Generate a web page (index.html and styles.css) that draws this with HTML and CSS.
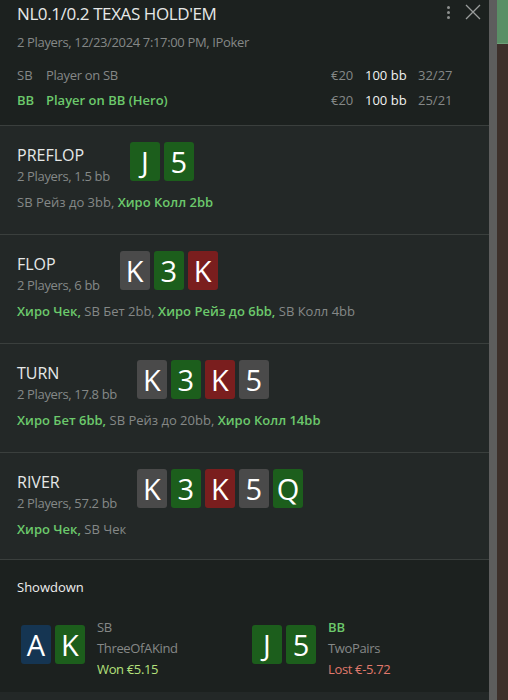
FILE: index.html
```html
<!DOCTYPE html>
<html lang="en">
<head>
  <meta charset="UTF-8">
  <meta name="viewport" content="width=device-width, initial-scale=1">
  <title>Hand History</title>
  <link rel="stylesheet" href="styles.css">
</head>
<body>
<div class="panel">
  <div class="header">
    <div class="header-top">
      <h1 class="game">NL0.1/0.2 TEXAS HOLD'EM</h1>
      <div class="tools">
        <span class="dots"><i></i><i></i><i></i></span>
        <svg class="close" width="16" height="16" viewBox="0 0 16 16"><path d="M1 1L15 15M15 1L1 15" stroke="#9a9d9c" stroke-width="1.3" fill="none"/></svg>
      </div>
    </div>
    <div class="meta">2 Players, 12/23/2024 7:17:00 PM, IPoker</div>
    <div class="players">
      <div class="player">
        <span class="pos">SB</span><span class="name">Player on SB</span>
        <span class="stack">€20</span><span class="bb">100 bb</span><span class="stat">32/27</span>
      </div>
      <div class="player hero">
        <span class="pos">BB</span><span class="name">Player on BB (Hero)</span>
        <span class="stack">€20</span><span class="bb">100 bb</span><span class="stat">25/21</span>
      </div>
    </div>
  </div>

  <div class="street">
    <div class="street-row">
      <div class="street-info"><div class="street-name">PREFLOP</div><div class="street-pot">2 Players, 1.5 bb</div></div>
      <div class="cards"><span class="card green">J</span><span class="card green">5</span></div>
    </div>
    <div class="actions">SB Рейз до 3bb, <b>Хиро Колл 2bb</b></div>
  </div>

  <div class="street">
    <div class="street-row">
      <div class="street-info"><div class="street-name">FLOP</div><div class="street-pot">2 Players, 6 bb</div></div>
      <div class="cards"><span class="card gray">K</span><span class="card green">3</span><span class="card red">K</span></div>
    </div>
    <div class="actions"><b>Хиро Чек,</b> SB Бет 2bb, <b>Хиро Рейз до 6bb,</b> SB Колл 4bb</div>
  </div>

  <div class="street">
    <div class="street-row">
      <div class="street-info"><div class="street-name">TURN</div><div class="street-pot">2 Players, 17.8 bb</div></div>
      <div class="cards"><span class="card gray">K</span><span class="card green">3</span><span class="card red">K</span><span class="card gray">5</span></div>
    </div>
    <div class="actions"><b>Хиро Бет 6bb,</b> SB Рейз до 20bb, <b>Хиро Колл 14bb</b></div>
  </div>

  <div class="street short">
    <div class="street-row">
      <div class="street-info"><div class="street-name">RIVER</div><div class="street-pot">2 Players, 57.2 bb</div></div>
      <div class="cards"><span class="card gray">K</span><span class="card green">3</span><span class="card red">K</span><span class="card gray">5</span><span class="card green">Q</span></div>
    </div>
    <div class="actions"><b>Хиро Чек,</b> SB Чек</div>
  </div>

  <div class="showdown">
    <div class="showdown-title">Showdown</div>
    <div class="hands">
      <div class="hand">
        <div class="cards"><span class="card blue">A</span><span class="card green">K</span></div>
        <div class="hand-info">
          <div class="hand-pos">SB</div>
          <div class="hand-rank">ThreeOfAKind</div>
          <div class="won">Won €5.15</div>
        </div>
      </div>
      <div class="hand">
        <div class="cards"><span class="card green">J</span><span class="card green">5</span></div>
        <div class="hand-info">
          <div class="hand-pos hero-pos">BB</div>
          <div class="hand-rank">TwoPairs</div>
          <div class="lost">Lost €-5.72</div>
        </div>
      </div>
    </div>
  </div>
</div>
<div class="scrollbar"></div>
<div class="backdrop"><div class="felt"></div><div class="wood"></div></div>
</body>
</html>
```

FILE: styles.css
```css
body { margin: 0; height: 700px; overflow: hidden; display: flex; background: #232827; font-family: "Open Sans", "Noto Sans", sans-serif; color: #8c8f8e; }
.panel { width: 489px; flex-shrink: 0; background: #232827; }
.scrollbar { width: 8px; background: #5d5d5d; }
.backdrop { flex: 1; display: flex; flex-direction: column; }
.felt { height: 43px; background: #5a8f66; border-bottom: 1px solid #6ea07a; }
.wood { flex: 1; background: #3d302b; }

.header { background: #1c211f; padding: 2px 17px 0; height: 123px; border-bottom: 1px solid #3a3f3d; }
.header-top { display: flex; justify-content: space-between; align-items: flex-start; }
.game { margin: 0; font-size: 17px; font-weight: 400; color: #e6e8e7; line-height: 24px; letter-spacing: -0.4px; }
.tools { display: flex; align-items: center; gap: 15px; margin-right: -9px; padding-top: 2px; }
.dots { display: flex; flex-direction: column; gap: 2px; }
.dots i { width: 3px; height: 3px; border-radius: 50%; background: #8c8f8e; display: block; }
.close { display: block; }
.meta { font-size: 13px; margin-top: 7px; color: #858887; letter-spacing: -0.35px; }
.players { margin-top: 15px; padding-right: 18px; display: flex; flex-direction: column; gap: 7px; }
.player { display: flex; font-size: 13px; line-height: 18px; color: #858887; }
.pos { width: 29px; }
.name { flex: 1; letter-spacing: -0.3px; }
.stack { width: 34px; }
.bb { width: 53px; color: #f2f2f2; }
.stat { width: 36px; }
.hero .pos, .hero .name { color: #6cc96c; font-weight: 600; letter-spacing: 0; }

.street { padding: 16px 17px 24px; border-bottom: 1px solid #3a3f3d; height: 68px; }
.street.short { height: 66px; }
.street-row { display: flex; align-items: flex-start; gap: 20px; }
.street-info { padding-top: 1px; }
.street-name { font-size: 16px; color: #e6e8e7; line-height: 24px; }
.street-pot { font-size: 13px; line-height: 18px; color: #858887; letter-spacing: -0.35px; }
.cards { display: flex; gap: 4px; }
.card { width: 30px; height: 39px; border-radius: 3px; color: #fff; font-size: 29px; line-height: 39px; text-align: center; }
.green { background: #1c5e1c; }
.red { background: #7a1e1e; }
.gray { background: #4a4a4a; }
.blue { background: #153552; }
.actions { margin-top: 8px; font-size: 13px; line-height: 18px; color: #858887; }
.actions b { color: #6cc96c; font-weight: 600; }

.showdown { background: #1c211f; padding: 18px 17px 20px 17px; height: 94px; }
.showdown-title { font-size: 13px; color: #eeeeee; font-weight: 500; }
.hands { display: flex; margin-top: 12px; padding-left: 4px; }
.hand { display: flex; align-items: center; gap: 12px; }
.hand:first-child { width: 231px; }
.hand-info { font-size: 13px; line-height: 21px; color: #858887; margin-top: 9px; letter-spacing: -0.35px; }
.hero-pos { color: #6cc96c; font-weight: 600; letter-spacing: 0; }
.won { color: #b4e07c; }
.lost { color: #e0796c; }
```
